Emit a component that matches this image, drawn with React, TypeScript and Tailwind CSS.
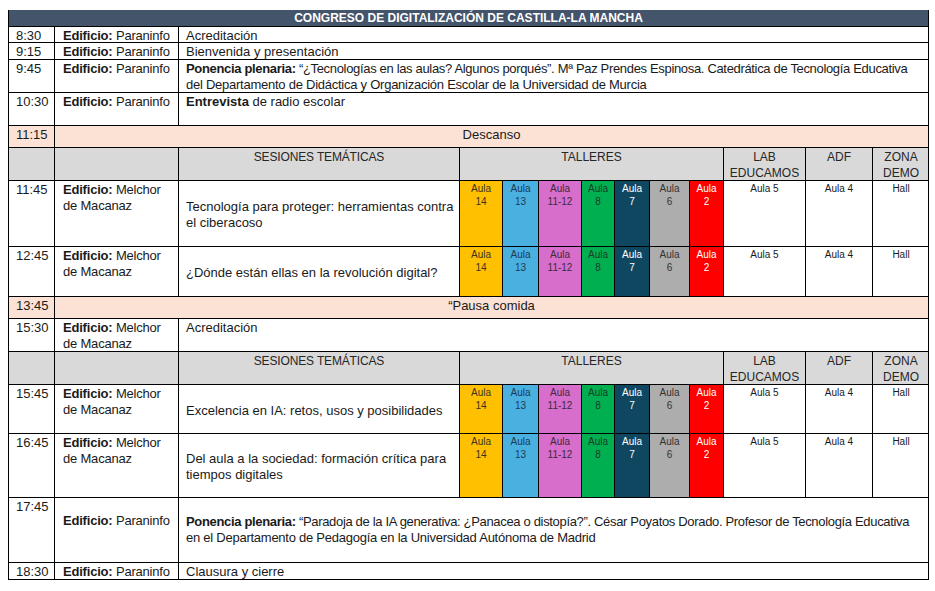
import React from 'react';

interface Aula {
  n: string;
  w: string;
  bg: string;
  text: string;
}

const aulas: Aula[] = [
  { n: '14', w: 'w-[43px]', bg: 'bg-[#ffc000]', text: 'text-[#3b3326]' },
  { n: '13', w: 'w-[36px]', bg: 'bg-[#4ab0e0]', text: 'text-[#1d3b52]' },
  { n: '11-12', w: 'w-[43px]', bg: 'bg-[#d86ecc]', text: 'text-[#3d2a3a]' },
  { n: '8', w: 'w-[33px]', bg: 'bg-[#00b050]', text: 'text-[#1c3b2a]' },
  { n: '7', w: 'w-[35px]', bg: 'bg-[#0f4761]', text: 'text-white' },
  { n: '6', w: 'w-[40px]', bg: 'bg-[#adadad]', text: 'text-[#333333]' },
  { n: '2', w: 'w-[34px]', bg: 'bg-[#ff0000]', text: 'text-white' },
];

function Time({ t, salmon }: { t?: string; salmon?: boolean }) {
  return (
    <div className={`w-[46px] shrink-0 border-r border-black pl-[7px] pt-px ${salmon ? 'bg-[#fbe2d5]' : ''}`}>
      {t}
    </div>
  );
}

function Building({ name, twoLines, offset }: { name: string; twoLines?: boolean; offset?: boolean }) {
  return (
    <div className={`w-[124px] shrink-0 border-r border-black pl-[8px] tracking-[-0.2px] ${offset ? 'pt-[15px]' : 'pt-px'}`}>
      {twoLines ? (
        <>
          <b>Edificio:</b> Melchor
          <br />
          de Macanaz
        </>
      ) : (
        <>
          <b>Edificio:</b> {name}
        </>
      )}
    </div>
  );
}

function SessionHeader() {
  return (
    <div className="flex h-[33px] border-b border-black bg-[#d9d9d9] text-[12px] leading-[16px] text-[#262626]">
      <div className="w-[46px] shrink-0 border-r border-black" />
      <div className="w-[124px] shrink-0 border-r border-black" />
      <div className="w-[281px] shrink-0 border-r border-black pt-px text-center tracking-[-0.15px]">SESIONES TEMÁTICAS</div>
      <div className="w-[264px] shrink-0 border-r border-black pt-px text-center">TALLERES</div>
      <div className="w-[82px] shrink-0 border-r border-black pt-px text-center">
        LAB
        <br />
        EDUCAMOS
      </div>
      <div className="w-[67px] shrink-0 border-r border-black pt-px text-center">ADF</div>
      <div className="w-[56px] shrink-0 pt-px text-center">
        ZONA
        <br />
        DEMO
      </div>
    </div>
  );
}

function SessionRow({ time, h, lines }: { time: string; h: string; lines: string[] }) {
  return (
    <div className={`flex ${h} border-b border-black`}>
      <Time t={time} />
      <Building name="" twoLines />
      <div className="flex w-[281px] shrink-0 items-center border-r border-black pl-[7px] pt-[3px]">
        <div>
          {lines.map((l) => (
            <div key={l}>{l}</div>
          ))}
        </div>
      </div>
      {aulas.map((a) => (
        <div
          key={a.n}
          className={`${a.w} ${a.bg} ${a.text} shrink-0 border-r border-black pt-px text-center text-[10px] leading-[13px]`}
        >
          Aula
          <br />
          {a.n}
        </div>
      ))}
      <div className="w-[82px] shrink-0 border-r border-black pt-px text-center text-[10px] leading-[13px]">Aula 5</div>
      <div className="w-[67px] shrink-0 border-r border-black pt-px text-center text-[10px] leading-[13px]">Aula 4</div>
      <div className="w-[56px] shrink-0 pt-px text-center text-[10px] leading-[13px]">Hall</div>
    </div>
  );
}

function PauseRow({ time, label }: { time: string; label: string }) {
  return (
    <div className="flex h-[22px] border-b border-black bg-[#fbe2d5]">
      <Time t={time} salmon />
      <div className="flex-1 pt-px text-center">{label}</div>
    </div>
  );
}

function SimpleRow({ time, h, children, building = 'Paraninfo' }: { time: string; h: string; children: React.ReactNode; building?: string }) {
  return (
    <div className={`flex ${h} border-b border-black`}>
      <Time t={time} />
      <Building name={building} />
      <div className="flex-1 whitespace-nowrap pl-[7px] pt-px">{children}</div>
    </div>
  );
}

export default function App() {
  return (
    <div className="min-h-[591px] w-[935px] bg-white pl-[8px] pt-[10px] font-['Liberation_Sans',Arial,sans-serif] text-[13px] leading-[16px] text-[#1a1a1a]">
      <div className="w-[921px] border-l border-r border-black">
        {/* Title */}
        <div className="h-[17px] border-b border-black bg-[#44546a] text-center text-[12px] font-bold leading-[16px] text-white">
          CONGRESO DE DIGITALIZACIÓN DE CASTILLA-LA MANCHA
        </div>

        <SimpleRow time="8:30" h="h-[16px]">Acreditación</SimpleRow>
        <SimpleRow time="9:15" h="h-[17px]">Bienvenida y presentación</SimpleRow>
        <SimpleRow time="9:45" h="h-[33px]">
          <div className="tracking-[-0.33px]">
            <b>Ponencia plenaria:</b> “¿Tecnologías en las aulas? Algunos porqués”. Mª Paz Prendes Espinosa. Catedrática de Tecnología Educativa
          </div>
          <div className="tracking-[-0.25px]">del Departamento de Didáctica y Organización Escolar de la Universidad de Murcia</div>
        </SimpleRow>
        <SimpleRow time="10:30" h="h-[33px]">
          <b>Entrevista</b> de radio escolar
        </SimpleRow>

        <PauseRow time="11:15" label="Descanso" />
        <SessionHeader />
        <SessionRow time="11:45" h="h-[66px]" lines={['Tecnología para proteger: herramientas contra', 'el ciberacoso']} />
        <SessionRow time="12:45" h="h-[50px]" lines={['¿Dónde están ellas en la revolución digital?']} />

        <PauseRow time="13:45" label="“Pausa comida" />

        <div className="flex h-[33px] border-b border-black">
          <Time t="15:30" />
          <Building name="" twoLines />
          <div className="flex-1 pl-[7px] pt-px">Acreditación</div>
        </div>

        <SessionHeader />
        <SessionRow time="15:45" h="h-[49px]" lines={['Excelencia en IA: retos, usos y posibilidades']} />
        <SessionRow time="16:45" h="h-[64px]" lines={['Del aula a la sociedad: formación crítica para', 'tiempos digitales']} />

        {/* Closing lecture */}
        <div className="flex h-[65px] border-b border-black">
          <Time t="17:45" />
          <Building name="Paraninfo" offset />
          <div className="flex flex-1 items-center whitespace-nowrap pl-[7px]">
            <div>
              <div className="tracking-[-0.33px]">
                <b>Ponencia plenaria:</b> “Paradoja de la IA generativa: ¿Panacea o distopía?”. César Poyatos Dorado. Profesor de Tecnología Educativa
              </div>
              <div className="tracking-[-0.25px]">en el Departamento de Pedagogía en la Universidad Autónoma de Madrid</div>
            </div>
          </div>
        </div>

        <SimpleRow time="18:30" h="h-[17px]">Clausura y cierre</SimpleRow>
      </div>
    </div>
  );
}
